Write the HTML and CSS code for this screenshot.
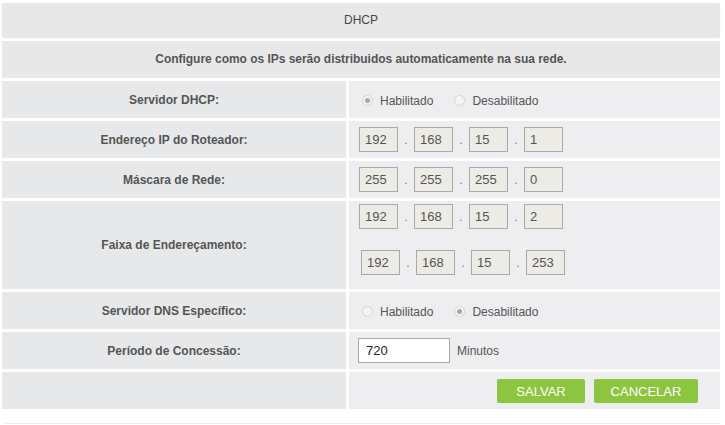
FILE: index.html
```html
<!DOCTYPE html>
<html lang="pt-BR">
<head>
<meta charset="UTF-8" />
<title>DHCP</title>
<link rel="stylesheet" href="styles.css">
</head>
<body>

<div class="panel">
  <div class="panel-title">DHCP</div>
  <div class="panel-desc">Configure como os IPs serão distribuidos automaticamente na sua rede.</div>

  <div class="row">
    <div class="label">Servidor DHCP:</div>
    <div class="value">
      <span class="radio checked"></span><span class="radio-text">Habilitado</span>
      <span class="radio"></span><span class="radio-text">Desabilitado</span>
    </div>
  </div>

  <div class="row">
    <div class="label">Endereço IP do Roteador:</div>
    <div class="value">
      <div class="ip">
        <span class="octet">192</span><span class="dot">.</span>
        <span class="octet">168</span><span class="dot">.</span>
        <span class="octet">15</span><span class="dot">.</span>
        <span class="octet">1</span>
      </div>
    </div>
  </div>

  <div class="row">
    <div class="label">Máscara de Rede:</div>
    <div class="value">
      <div class="ip">
        <span class="octet">255</span><span class="dot">.</span>
        <span class="octet">255</span><span class="dot">.</span>
        <span class="octet">255</span><span class="dot">.</span>
        <span class="octet">0</span>
      </div>
    </div>
  </div>

  <div class="row row-tall">
    <div class="label">Faixa de Endereçamento:</div>
    <div class="value value-stack">
      <div class="ip">
        <span class="octet">192</span><span class="dot">.</span>
        <span class="octet">168</span><span class="dot">.</span>
        <span class="octet">15</span><span class="dot">.</span>
        <span class="octet">2</span>
      </div>
      <div class="ip ip-end">
        <span class="octet">192</span><span class="dot">.</span>
        <span class="octet">168</span><span class="dot">.</span>
        <span class="octet">15</span><span class="dot">.</span>
        <span class="octet">253</span>
      </div>
    </div>
  </div>

  <div class="row">
    <div class="label">Servidor DNS Específico:</div>
    <div class="value">
      <span class="radio"></span><span class="radio-text">Habilitado</span>
      <span class="radio checked"></span><span class="radio-text">Desabilitado</span>
    </div>
  </div>

  <div class="row">
    <div class="label">Período de Concessão:</div>
    <div class="value">
      <input type="text" class="lease" value="720" />
      <span class="unit">Minutos</span>
    </div>
  </div>

  <div class="row">
    <div class="label"></div>
    <div class="value value-buttons">
      <button class="btn">SALVAR</button>
      <button class="btn btn-wide">CANCELAR</button>
    </div>
  </div>
</div>

<div class="footer-line"></div>

</body>
</html>
```

FILE: styles.css
```css
body {
  margin: 0;
  background-color: #fff;
  font-family: "Liberation Sans", Arial, sans-serif;
  font-size: 12px;
  color: #555;
}
.panel {
  width: 718px;
  margin: 3px 0 0 2px;
  display: flex;
  flex-direction: column;
  gap: 3px;
}
.panel-title {
  height: 35px;
  line-height: 35px;
  text-align: center;
  background-color: #e8e8e9;
  border-radius: 3px;
  box-shadow: 0 0 1px #d8d8d8;
  color: #444;
}
.panel-desc {
  height: 37px;
  line-height: 37px;
  text-align: center;
  background-color: #e8e8e9;
  font-weight: bold;
  letter-spacing: -0.03px;
  color: #555;
}
.row {
  display: flex;
  gap: 3px;
  height: 37px;
}
.row-tall {
  height: 88px;
}
.label {
  width: 344px;
  flex-shrink: 0;
  display: flex;
  align-items: center;
  justify-content: center;
  background-color: #e7e8e9;
  font-weight: bold;
  color: #555;
}
.value {
  flex: 1;
  display: flex;
  align-items: center;
  padding-left: 10px;
  background-color: #eeeef0;
}
.value-stack {
  flex-direction: column;
  align-items: flex-start;
  justify-content: flex-start;
  gap: 21px;
  padding-top: 3px;
}
.ip {
  display: flex;
  align-items: center;
}
.ip-end {
  margin-left: 2px;
}
.octet {
  line-height: 23px;
  padding-left: 5px;
  box-sizing: border-box;
  width: 39px;
  height: 25px;
  border: 1px solid #a9a9a9;
  background-color: #ecebe5;
  font-size: 13px;
  color: #555;
}
.dot {
  width: 16px;
  text-align: center;
  font-size: 12px;
  color: #777;
}
.radio {
  display: inline-block;
  width: 11px;
  height: 11px;
  border-radius: 50%;
  border: 1px solid #d4d4d4;
  background-color: #f4f4f4;
  box-sizing: border-box;
  margin: 1px 7px 0 3px;
  position: relative;
}
.radio.checked::after {
  content: "";
  position: absolute;
  left: 2px;
  top: 2px;
  width: 5px;
  height: 5px;
  border-radius: 50%;
  background-color: #a8a8a8;
}
.radio-text {
  margin-right: 18px;
  margin-top: 2px;
  color: #555;
}
.lease {
  width: 92px;
  height: 25px;
  box-sizing: border-box;
  border: 1px solid #a9a9a9;
  background-color: #fff;
  padding: 0 0 0 7px;
  margin: 0 7px 0 -1px;
  font-family: "Liberation Sans", Arial, sans-serif;
  font-size: 13px;
  color: #222;
}
.unit {
  color: #555;
}
.value-buttons {
  justify-content: flex-end;
  padding-right: 22px;
  gap: 9px;
  padding-top: 1px;
}
.btn {
  height: 24px;
  width: 88px;
  border: none;
  border-radius: 2px;
  background-color: #8cc63e;
  color: #fff;
  font-family: "Liberation Sans", Arial, sans-serif;
  font-size: 13px;
  cursor: pointer;
}
.btn-wide {
  width: 104px;
}
.footer-line {
  margin: 14px 5px 0 5px;
  width: 715px;
  border-top: 1px solid #ececec;
}
```
